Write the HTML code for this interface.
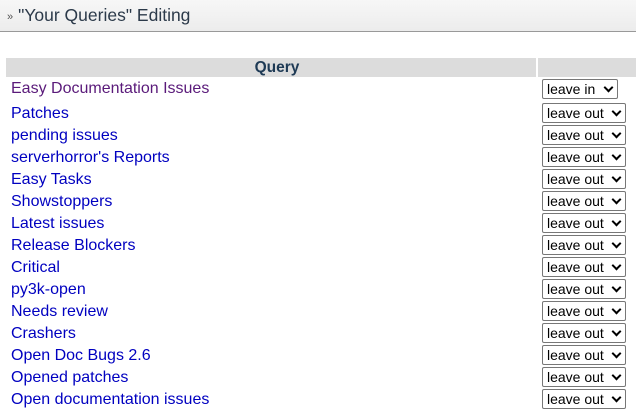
<!DOCTYPE html>
<html><head><style>
body{margin:0;width:636px;height:412px;overflow:hidden;background:#fff;font-family:"Liberation Sans",Arial,sans-serif;position:relative}
.hd{position:absolute;left:0;top:0;width:636px;height:31px;background:linear-gradient(#f7f7f7,#ececec);border-bottom:1px solid #999}
.hd span{position:absolute;left:7px;top:5px;font-size:17.5px;color:#2c3a4a}
.hd small{font-size:11px;margin-right:5px;color:#555;position:relative;top:-1px}
.th1{position:absolute;left:6px;top:58px;width:530px;height:19px;background:#dcdcdc;font-weight:bold;font-size:15.5px;color:#1e3a55;text-align:center;line-height:20px}
.th1 b{position:relative;left:6px}
.th2{position:absolute;left:538px;top:58px;width:98px;height:19px;background:#dcdcdc}
.r{position:absolute;left:11px;font-size:16px;color:#0000c0;margin-top:1px}
.s{position:absolute;left:542px;height:18px;border:1px solid #777;border-radius:2px;font-size:14px;line-height:19px;padding-left:4px;box-sizing:content-box;color:#000;background:#fff}
.s i{position:absolute;right:5px;top:4px;width:5px;height:5px;border-right:2px solid #000;border-bottom:2px solid #000;transform:rotate(45deg)}
</style></head><body>
<div class="hd"><span><small>»</small>"Your Queries" Editing</span></div>
<div class="th1"><b>Query</b></div><div class="th2"></div>
<div class="r" style="top:79px;color:#5a1a7a">Easy Documentation Issues</div>
<div class="s" style="top:79px;width:70px">leave in<i></i></div>
<div class="r" style="top:104px">Patches</div><div class="s" style="top:103px;width:78px">leave out<i></i></div>
<div class="r" style="top:126px">pending issues</div><div class="s" style="top:125px;width:78px">leave out<i></i></div>
<div class="r" style="top:148px">serverhorror's Reports</div><div class="s" style="top:147px;width:78px">leave out<i></i></div>
<div class="r" style="top:170px">Easy Tasks</div><div class="s" style="top:169px;width:78px">leave out<i></i></div>
<div class="r" style="top:192px">Showstoppers</div><div class="s" style="top:191px;width:78px">leave out<i></i></div>
<div class="r" style="top:214px">Latest issues</div><div class="s" style="top:213px;width:78px">leave out<i></i></div>
<div class="r" style="top:236px">Release Blockers</div><div class="s" style="top:235px;width:78px">leave out<i></i></div>
<div class="r" style="top:258px">Critical</div><div class="s" style="top:257px;width:78px">leave out<i></i></div>
<div class="r" style="top:280px">py3k-open</div><div class="s" style="top:279px;width:78px">leave out<i></i></div>
<div class="r" style="top:302px">Needs review</div><div class="s" style="top:301px;width:78px">leave out<i></i></div>
<div class="r" style="top:324px">Crashers</div><div class="s" style="top:323px;width:78px">leave out<i></i></div>
<div class="r" style="top:346px">Open Doc Bugs 2.6</div><div class="s" style="top:345px;width:78px">leave out<i></i></div>
<div class="r" style="top:368px">Opened patches</div><div class="s" style="top:367px;width:78px">leave out<i></i></div>
<div class="r" style="top:390px">Open documentation issues</div><div class="s" style="top:389px;width:78px">leave out<i></i></div>
</body></html>
